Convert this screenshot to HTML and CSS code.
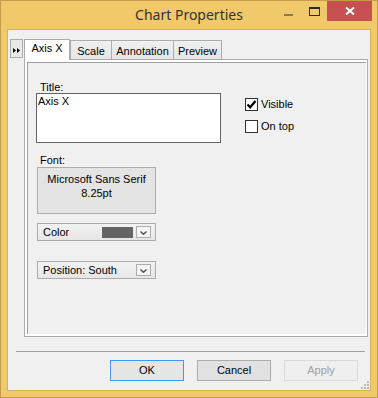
FILE: index.html
```html
<!DOCTYPE html>
<html>
<head>
<meta charset="utf-8">
<link rel="stylesheet" href="styles.css">
</head>
<body>
<div class="window">
  <div class="titlebar">
    <div class="tb-spacer"></div>
    <div class="title">Chart Properties</div>
    <div class="caps">
      <div class="cap cap-min"><span class="min-glyph"></span></div>
      <div class="cap cap-max"><span class="max-glyph"></span></div>
      <div class="cap cap-close">
        <svg width="10" height="8" viewBox="0 0 10 8"><path d="M1 0.5 L9 7.5 M9 0.5 L1 7.5" stroke="#fff" stroke-width="2" fill="none"/></svg>
      </div>
    </div>
  </div>
  <div class="client">
    <div class="top">
      <div class="side-btn">
        <svg width="7" height="5" viewBox="0 0 7 5"><polygon points="0,0 3,2.5 0,5" fill="#000"/><polygon points="4,0 7,2.5 4,5" fill="#000"/></svg>
      </div>
      <div class="tabctl">
        <div class="tabs">
          <div class="tab tab-sel tab-axis">Axis X</div>
          <div class="tab tab-scale">Scale</div>
          <div class="tab tab-annot">Annotation</div>
          <div class="tab tab-prev">Preview</div>
        </div>
        <div class="panel">
          <div class="page">
            <div class="form-row">
              <div class="col-left">
                <div class="label">Title:</div>
                <div class="textbox">Axis X</div>
              </div>
              <div class="col-right">
                <div class="check-row">
                  <span class="checkbox">
                    <svg width="11" height="11" viewBox="0 0 11 11"><path d="M1.5 5.5 L4.2 8.3 L9.5 2" stroke="#000" stroke-width="2.2" fill="none"/></svg>
                  </span>
                  <span class="check-label">Visible</span>
                </div>
                <div class="check-row">
                  <span class="checkbox"></span>
                  <span class="check-label">On top</span>
                </div>
              </div>
            </div>
            <div class="label label-font">Font:</div>
            <div class="font-btn">Microsoft Sans Serif<br>8.25pt</div>
            <div class="combo combo-color">
              <span class="combo-text">Color</span>
              <span class="swatch"></span>
              <span class="drop"><svg width="7" height="4" viewBox="0 0 7 4"><path d="M0.5 0.5 L3.5 3.3 L6.5 0.5" stroke="#505050" stroke-width="1.4" fill="none"/></svg></span>
            </div>
            <div class="combo combo-pos">
              <span class="combo-text">Position: South</span>
              <span class="drop"><svg width="7" height="4" viewBox="0 0 7 4"><path d="M0.5 0.5 L3.5 3.3 L6.5 0.5" stroke="#505050" stroke-width="1.4" fill="none"/></svg></span>
            </div>
          </div>
        </div>
      </div>
    </div>
    <div class="sep"></div>
    <div class="buttons">
      <div class="btn btn-default">OK</div>
      <div class="btn">Cancel</div>
      <div class="btn btn-disabled">Apply</div>
    </div>
    <svg class="grip" width="8" height="8" viewBox="0 0 8 8">
      <rect x="6" y="0" width="2" height="2" fill="#b8b8b8"/>
      <rect x="3" y="3" width="2" height="2" fill="#b8b8b8"/>
      <rect x="6" y="3" width="2" height="2" fill="#b8b8b8"/>
      <rect x="0" y="6" width="2" height="2" fill="#b8b8b8"/>
      <rect x="3" y="6" width="2" height="2" fill="#b8b8b8"/>
      <rect x="6" y="6" width="2" height="2" fill="#b8b8b8"/>
    </svg>
  </div>
</div>
</body>
</html>
```

FILE: styles.css
```css
* { box-sizing: border-box; }
html, body { margin: 0; padding: 0; }
body {
  font-family: "Liberation Sans", Arial, sans-serif;
  font-size: 11px;
  color: #000;
  background: #f0c96b;
}
.window {
  width: 378px;
  height: 398px;
  background: #f0c96b;
  border: 1px solid #c39d4b;
  display: flex;
  flex-direction: column;
}
.titlebar {
  height: 28px;
  display: grid;
  grid-template-columns: 1fr auto 1fr;
  align-items: start;
}
.title {
  font-family: "Noto Sans", "Open Sans", sans-serif;
  font-size: 14px;
  line-height: 19px;
  margin-top: 4px;
  color: #333;
  white-space: nowrap;
}
.caps {
  display: flex;
  justify-content: flex-end;
  padding-right: 5px;
}
.cap {
  height: 20px;
  display: flex;
  align-items: center;
  justify-content: center;
}
.cap-min { width: 26px; }
.cap-max { width: 26px; }
.cap-close { width: 45px; background: #c75050; }
.min-glyph {
  width: 9px;
  height: 2px;
  background: #8c7a4a;
  margin-top: 7px;
}
.max-glyph {
  width: 11px;
  height: 9px;
  border: 1px solid #2b2b2b;
  border-top-width: 2px;
}
.client {
  position: relative;
  margin: 0 6px 6px 6px;
  height: 362px;
  background: #f0f0f0;
  border: 1px solid #d7b05c;
}
.top {
  display: flex;
  padding-top: 9px;
}
.side-btn {
  margin-left: 2px;
  width: 13px;
  height: 19px;
  border: 1px solid #acacac;
  background: #e9e9e9;
  display: flex;
  justify-content: center;
  padding-top: 8px;
}
.side-btn svg { display: block; }
.tabctl {
  margin-left: 1px;
  width: 344px;
  display: flex;
  flex-direction: column;
}
.tabs {
  height: 20px;
  display: flex;
  align-items: flex-end;
  position: relative;
  z-index: 1;
}
.tab {
  height: 19px;
  border: 1px solid #acacac;
  border-bottom: none;
  background: linear-gradient(#f0f0f0, #e5e5e5);
  text-align: center;
  line-height: 13px;
  padding-top: 4px;
  margin-left: -1px;
  white-space: nowrap;
}
.tab-sel {
  height: 21px;
  margin-bottom: -1px;
  background: #fff;
  padding-top: 2px;
  margin-left: 0;
  position: relative;
  z-index: 2;
}
.tab-axis { width: 46px; }
.tab-scale { width: 42px; margin-left: 0; }
.tab-annot { width: 63px; }
.tab-prev { width: 49px; }
.panel {
  height: 278px;
  border: 1px solid #acacac;
  background: #fff;
  padding: 2px 1px 2px 2px;
}
.page {
  height: 100%;
  background: #f0f0f0;
  border-left: 1px solid #a0a0a0;
  border-top: 1px solid #a0a0a0;
  padding: 18px 0 0 8px;
}
.form-row { display: flex; }
.label {
  line-height: 12px;
  padding-left: 4px;
}
.textbox {
  width: 185px;
  height: 50px;
  border: 1px solid #646464;
  background: #fff;
  padding: 1px 1px;
  line-height: 13px;
}
.col-right {
  margin-left: 24px;
  padding-top: 17px;
}
.check-row {
  display: flex;
  align-items: center;
  height: 13px;
  margin-bottom: 9px;
}
.checkbox {
  width: 13px;
  height: 13px;
  border: 1px solid #333;
  background: #fff;
  display: flex;
  align-items: center;
  justify-content: center;
}
.checkbox svg { display: block; }
.check-label { margin-left: 3px; line-height: 13px; }
.label-font { margin-top: 11px; }
.font-btn {
  margin-top: 1px;
  margin-left: 1px;
  width: 119px;
  height: 47px;
  border: 1px solid #adadad;
  background: #e4e4e4;
  text-align: center;
  line-height: 14px;
  padding-top: 4px;
}
.combo {
  margin-left: 1px;
  width: 119px;
  height: 18px;
  border: 1px solid #acacac;
  background: linear-gradient(#f2f2f2, #e6e6e6);
  display: flex;
  align-items: center;
  padding-left: 5px;
}
.combo-color { margin-top: 9px; }
.combo-pos { margin-top: 20px; }
.combo-text { flex: 1; line-height: 13px; padding-top: 1px; }
.swatch {
  width: 31px;
  height: 11px;
  background: #646464;
}
.drop {
  width: 15px;
  height: 12px;
  margin-left: 3px;
  margin-right: 4px;
  border: 1px solid #acacac;
  background: #f4f4f4;
  display: flex;
  align-items: center;
  justify-content: center;
  padding-top: 1px;
}
.drop svg { display: block; }
.sep {
  margin-top: 14px;
  margin-left: 8px;
  width: 349px;
  height: 1px;
  background: #a0a0a0;
}
.buttons {
  margin-top: 8px;
  display: flex;
  justify-content: flex-end;
  gap: 13px;
  padding-right: 12px;
}
.btn {
  width: 74px;
  height: 21px;
  border: 1px solid #acacac;
  background: #e1e1e1;
  text-align: center;
  line-height: 19px;
}
.btn-default {
  border-color: #3c9bf0;
  background: #e5e5e5;
}
.btn-disabled {
  border-color: #d9d9d9;
  background: #efefef;
  color: #a0a0a0;
}
.grip {
  position: absolute;
  right: 1px;
  bottom: 1px;
  display: block;
}
```
